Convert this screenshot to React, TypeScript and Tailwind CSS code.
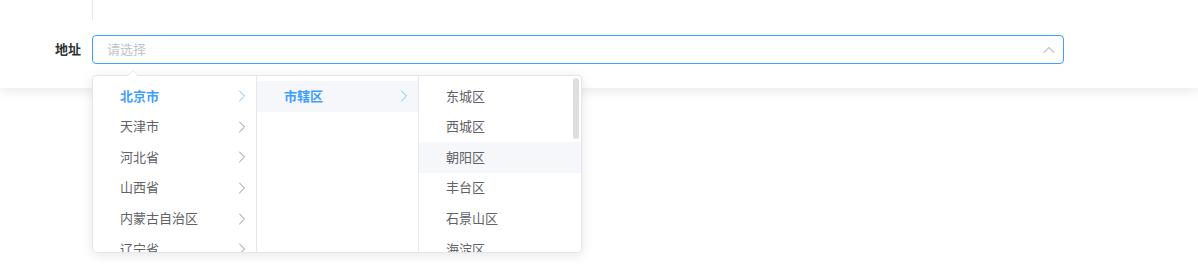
import { ChevronRight, ChevronUp } from "lucide-react";

const provinces = ["北京市", "天津市", "河北省", "山西省", "内蒙古自治区", "辽宁省"];
const districts = ["东城区", "西城区", "朝阳区", "丰台区", "石景山区", "海淀区"];

const font = "font-['Inter','Noto_Sans_CJK_SC',sans-serif]";

function MenuItem({
  label,
  active,
  hover,
  arrow,
}: {
  label: string;
  active?: boolean;
  hover?: boolean;
  arrow?: boolean;
}) {
  return (
    <li
      className={`flex h-[30.6px] shrink-0 items-center justify-between pl-[27px] pr-[4px] text-[13px] ${
        active ? "font-bold text-[#409eff]" : "text-[#606266]"
      } ${hover ? "bg-[#f5f7fa]" : ""}`}
    >
      <span>{label}</span>
      {arrow ? (
        <ChevronRight
          aria-hidden="true"
          strokeWidth={1.2}
          className={`h-5 w-5 ${active ? "text-[#79bbff]" : "text-[#909399]"}`}
        />
      ) : null}
    </li>
  );
}

export default function App() {
  return (
    <div className={`relative min-h-[277px] bg-white ${font}`}>
      <div className="bg-white pb-[24px] shadow-[0_2px_12px_0_rgba(0,0,0,0.1)]">
        <div className="h-[20px] pl-[92px]">
          <div className="h-full w-px bg-[#e4e7ed]" />
        </div>
        <div className="mt-[15px] flex items-center">
          <label className="w-[92px] shrink-0 pr-[11px] text-right text-[13px] font-bold text-[#303133]">地址</label>
          <div className="flex h-[29px] w-[972px] items-center justify-between rounded-[4px] border border-[#409eff] pl-[14px] pr-[4px]">
            <span className="text-[13px] text-[#c0c4cc]">请选择</span>
            <ChevronUp aria-hidden="true" strokeWidth={1.3} className="h-5 w-5 text-[#c0c4cc]" />
          </div>
        </div>
      </div>

      <div className="absolute left-[92px] top-[75px] h-[178px] w-[490px] rounded-[4px] border border-[#e4e7ed] bg-white shadow-[0_2px_12px_0_rgba(0,0,0,0.1)]">
        <div className="absolute -top-[6px] left-[34px] h-0 w-0 border-x-[6px] border-b-[6px] border-x-transparent border-b-[#e4e7ed]" />
        <div className="absolute -top-[5px] left-[34px] h-0 w-0 border-x-[6px] border-b-[6px] border-x-transparent border-b-white" />
        <div className="flex h-full overflow-hidden rounded-[4px]">
          <ul className="flex w-[164px] flex-col overflow-hidden border-r border-[#e4e7ed] pt-[5px]">
            {provinces.map((p, i) => (
              <MenuItem key={p} label={p} active={i === 0} arrow />
            ))}
          </ul>
          <ul className="flex w-[162px] flex-col overflow-hidden border-r border-[#e4e7ed] pt-[5px]">
            <MenuItem label="市辖区" active hover arrow />
          </ul>
          <div className="relative flex-1 overflow-hidden">
            <ul className="flex flex-col pt-[5px]">
              {districts.map((d, i) => (
                <MenuItem key={d} label={d} hover={i === 2} />
              ))}
            </ul>
            <div className="absolute right-[2px] top-[2px] h-[61px] w-[6px] rounded-full bg-[#dddee0]" />
          </div>
        </div>
      </div>
    </div>
  );
}
